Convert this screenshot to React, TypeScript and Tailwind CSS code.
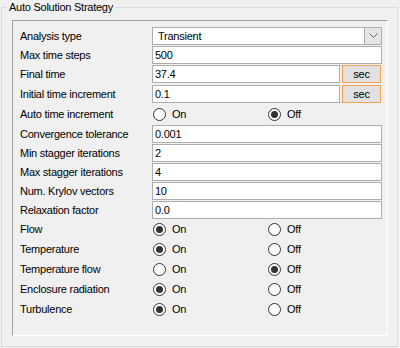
import type { ReactNode } from 'react';

interface RowProps {
  label: string;
  className: string;
  children: ReactNode;
}

function Row({ label, className, children }: RowProps) {
  return (
    <div className={`flex items-start ${className}`}>
      <div className="w-[132px] h-[18px] leading-[18px] shrink-0 whitespace-nowrap">{label}</div>
      {children}
    </div>
  );
}

function TextBox({ value, wide = true }: { value: string; wide?: boolean }) {
  return (
    <input
      readOnly
      defaultValue={value}
      className={`${wide ? 'w-[230px]' : 'w-[188px]'} h-[18px] bg-white border border-[#adadad] pl-[2px] text-[11px] leading-[16px] outline-none`}
    />
  );
}

function Radio({ checked, label }: { checked: boolean; label: string }) {
  return (
    <div className="flex items-center gap-[6px]">
      <span className="w-[13px] h-[13px] rounded-full border border-[#333333] bg-white flex items-center justify-center">
        {checked && <span className="w-[7px] h-[7px] rounded-full bg-[#333333]" />}
      </span>
      <span className="leading-[14px]">{label}</span>
    </div>
  );
}

function RadioRow({ label, on, className }: { label: string; on: boolean; className: string }) {
  return (
    <div className={`flex items-center ${className}`}>
      <div className="w-[132px] shrink-0 whitespace-nowrap leading-[14px]">{label}</div>
      <div className="w-[116px] pl-[1px]">
        <Radio checked={on} label="On" />
      </div>
      <Radio checked={!on} label="Off" />
    </div>
  );
}

function SecButton() {
  return (
    <button className="ml-[2px] w-[39px] h-[18px] bg-[#e1e1e1] border border-[#f0a24e] text-[11px] leading-[16px] text-center">
      sec
    </button>
  );
}

export default function App() {
  return (
    <div className="w-[400px] h-[348px] bg-[#f0f0f0] pt-[7px] pl-[1px] font-['Liberation_Sans',Arial,sans-serif] text-[11px] tracking-[-0.25px] text-black">
      <div className="relative w-[397px] h-[340px] border border-[#dcdcdc] pl-[10px] pt-[12px]">
        <span className="absolute left-[5px] -top-[8px] bg-[#f0f0f0] px-[2px] leading-[14px]">
          Auto Solution Strategy
        </span>
        <div className="w-[376px] h-[316px] border border-t-[#a0a0a0] border-l-[#a0a0a0] border-r-white border-b-white pl-[7px] pt-[6px]">
          <Row label="Analysis type" className="h-[19px]">
            <div className="w-[230px] h-[18px] bg-white border border-[#adadad] flex">
              <span className="flex-1 pl-[5px] leading-[16px]">Transient</span>
              <span className="w-[17px] h-[16px] bg-[#e5e5e5] border-l border-[#adadad] flex items-center justify-center">
                <svg width="9" height="6" viewBox="0 0 9 6">
                  <polyline points="0.5,0.5 4.5,4.5 8.5,0.5" fill="none" stroke="#606060" strokeWidth="1" />
                </svg>
              </span>
            </div>
          </Row>
          <Row label="Max time steps" className="h-[19px]">
            <TextBox value="500" />
          </Row>
          <Row label="Final time" className="h-[20px]">
            <TextBox value="37.4" wide={false} />
            <SecButton />
          </Row>
          <Row label="Initial time increment" className="h-[18px]">
            <TextBox value="0.1" wide={false} />
            <SecButton />
          </Row>
          <RadioRow label="Auto time increment" on={false} className="h-[22px]" />
          <Row label="Convergence tolerance" className="h-[19px]">
            <TextBox value="0.001" />
          </Row>
          <Row label="Min stagger iterations" className="h-[19px]">
            <TextBox value="2" />
          </Row>
          <Row label="Max stagger iterations" className="h-[19px]">
            <TextBox value="4" />
          </Row>
          <Row label="Num. Krylov vectors" className="h-[19px]">
            <TextBox value="10" />
          </Row>
          <Row label="Relaxation factor" className="h-[18px]">
            <TextBox value="0.0" />
          </Row>
          <RadioRow label="Flow" on={true} className="h-[20px]" />
          <RadioRow label="Temperature" on={true} className="h-[20px]" />
          <RadioRow label="Temperature flow" on={false} className="h-[20px]" />
          <RadioRow label="Enclosure radiation" on={true} className="h-[20px]" />
          <RadioRow label="Turbulence" on={true} className="h-[20px]" />
        </div>
      </div>
    </div>
  );
}
